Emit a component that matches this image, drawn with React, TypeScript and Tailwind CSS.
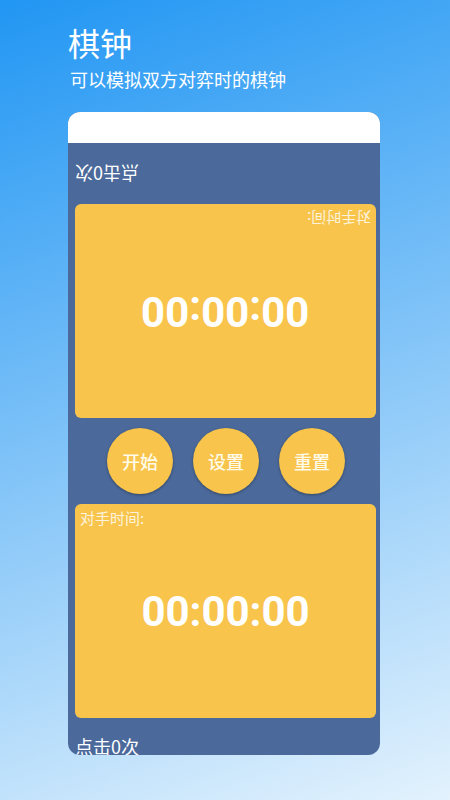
const font = { fontFamily: '"Noto Sans CJK SC", "Noto Sans", sans-serif' };

const Clock = ({ flipped }: { flipped?: boolean }) => (
  <div className="relative h-[214px] rounded-md bg-[#f8c44c] flex items-center justify-center">
    <span
      className={
        flipped
          ? "absolute top-[2px] right-[5px] rotate-180 text-[15px] text-[#fdf3dc]"
          : "absolute top-[3px] left-[5px] text-[15px] text-[#fdf3dc]"
      }
    >
      对手时间:
    </span>
    <span
      className={
        flipped
          ? "rotate-180 text-[42px] font-bold text-white font-['Roboto']"
          : "text-[42px] font-bold text-white font-['Roboto']"
      }
    >
      00:00:00
    </span>
  </div>
);

const buttons = ["开始", "设置", "重置"];

export default function App() {
  return (
    <div
      className="h-[800px] overflow-hidden bg-[linear-gradient(160deg,#2196f3,#e3f2fd)] pl-[68px] pt-[18px]"
      style={font}
    >
      <h1 className="text-[32px] leading-[48px] text-white">棋钟</h1>
      <p className="ml-[2px] text-[18px] leading-[27px] text-white">可以模拟双方对弈时的棋钟</p>

      <div className="mt-[19px] w-[312px] h-[643px] rounded-xl overflow-hidden flex flex-col bg-[#4b6a9b]">
        <div className="h-[31px] bg-white shrink-0"></div>
        <div className="flex-1 pl-[7px] pr-[4px]">
          <div className="h-[61px] flex items-center justify-end rotate-180 pl-[1px]">
            <span className="text-[18px] text-white">点击0次</span>
          </div>
          <Clock flipped />
          <div className="h-[86px] flex items-center justify-center gap-5 pl-[1px]">
            {buttons.map((b) => (
              <div
                key={b}
                className="w-[66px] h-[66px] rounded-full bg-[#f8c44c] shadow-[0_1px_3px_rgba(0,0,0,0.35)] flex items-center justify-center text-[18px] font-medium text-[#fffbe9]"
              >
                {b}
              </div>
            ))}
          </div>
          <Clock />
          <div className="pt-[15px] text-[18px] text-white">点击0次</div>
        </div>
      </div>
    </div>
  );
}
